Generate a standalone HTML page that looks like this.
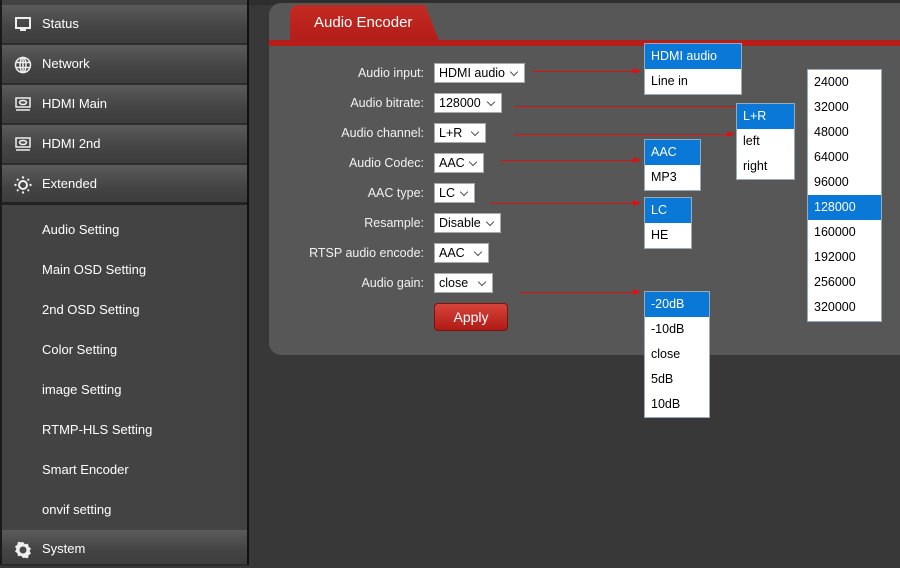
<!DOCTYPE html>
<html><head><meta charset="utf-8"><style>
*{margin:0;padding:0;box-sizing:border-box}
body{width:900px;height:565px;overflow:hidden;background:#383838;font-family:"Liberation Sans",Arial,sans-serif;position:relative}
.a{position:absolute}
#side{left:0;top:0;width:249px;height:565px;background:#434343;border-left:2px solid #1a1a1a;border-right:2px solid #111}
.row{position:absolute;left:0;width:245px;height:40px;background:linear-gradient(#5b5b5b,#444 60%,#3d3d3d);border-bottom:2px solid #2c2c2c;color:#fff;font-size:13px;line-height:38px;padding-left:40px}
.row svg{position:absolute;left:12px;top:11px}
.sub{position:absolute;left:40px;color:#fff;font-size:13px}
#panel{left:269px;top:3px;width:640px;height:352px;background:#575757;border-radius:12px 0 0 12px}
#tab{left:290px;top:5px;width:150px;height:38px;background:linear-gradient(#c32a22,#b31d18);border-radius:8px 8px 0 0;color:#fff;font-size:15px;line-height:36px;padding-left:24px;clip-path:polygon(0 0,135px 0,100% 100%,0 100%)}
#bar{left:269px;top:40px;width:631px;height:6px;background:#b71e1a}
.lbl{position:absolute;right:476px;color:#f2f2f2;font-size:12.5px;text-align:right;white-space:nowrap}
.sel{position:absolute;left:434px;height:20px;background:#fff;border:1px solid #aaa;font-size:12.5px;line-height:18px;padding-left:4px;color:#000}
.sel:after{content:"";position:absolute;right:7px;top:5px;width:5px;height:5px;border-right:1px solid #555;border-bottom:1px solid #555;transform:rotate(45deg)}
.ln{position:absolute;height:0;border-top:1px solid #e01010}
.ln:after{content:"";position:absolute;right:-1px;top:-4px;border-left:8px solid #e01010;border-top:3.5px solid transparent;border-bottom:3.5px solid transparent}
.dd{position:absolute;background:#fff;border:1px solid #9ab;font-size:12.5px;color:#000}
.dd div{height:25px;line-height:25px;padding-left:6px}
.dd .s{background:#0a78d7;color:#fff}
#apply{left:434px;top:303px;width:74px;height:28px;background:linear-gradient(#d6443a,#b11b16);border:1px solid #7a1410;border-radius:4px;color:#fff;font-size:14px;text-align:center;line-height:26px}
</style></head><body>
<div class="a" style="left:0;top:0;width:900px;height:5px;background:#2e2e2e"></div>
<div id="side" class="a">
<div class="row" style="top:5px"><svg width="18" height="18" viewBox="0 0 18 18"><rect x="2" y="2" width="14" height="10" fill="none" stroke="#eee" stroke-width="2"/><rect x="6" y="13" width="6" height="2" fill="#eee"/></svg>Status</div>
<div class="row" style="top:45px"><svg width="18" height="18" viewBox="0 0 18 18" fill="none" stroke="#eee" stroke-width="1.5"><circle cx="9" cy="9" r="7.5"/><ellipse cx="9" cy="9" rx="3" ry="7.5"/><path d="M2 6.5H16M2 11.5H16M9 1.5V16.5"/></svg>Network</div>
<div class="row" style="top:85px"><svg width="18" height="18" viewBox="0 0 18 18" fill="none" stroke="#eee" stroke-width="1.5"><rect x="2" y="2" width="14" height="9"/><ellipse cx="9" cy="6.5" rx="3.5" ry="2"/><path d="M2 14H16"/></svg>HDMI Main</div>
<div class="row" style="top:125px"><svg width="18" height="18" viewBox="0 0 18 18" fill="none" stroke="#eee" stroke-width="1.5"><rect x="2" y="2" width="14" height="9"/><ellipse cx="9" cy="6.5" rx="3.5" ry="2"/><path d="M2 14H16"/></svg>HDMI 2nd</div>
<div class="row" style="top:165px;border-bottom:3px solid #222"><svg width="18" height="18" viewBox="0 0 18 18"><circle cx="9" cy="9" r="4" fill="none" stroke="#eee" stroke-width="2"/><g fill="#eee"><circle cx="9" cy="1.5" r="1.2"/><circle cx="9" cy="16.5" r="1.2"/><circle cx="1.5" cy="9" r="1.2"/><circle cx="16.5" cy="9" r="1.2"/><circle cx="3.7" cy="3.7" r="1.1"/><circle cx="14.3" cy="3.7" r="1.1"/><circle cx="3.7" cy="14.3" r="1.1"/><circle cx="14.3" cy="14.3" r="1.1"/></g></svg>Extended</div>
<div class="sub" style="top:222px">Audio Setting</div>
<div class="sub" style="top:262px">Main OSD Setting</div>
<div class="sub" style="top:302px">2nd OSD Setting</div>
<div class="sub" style="top:342px">Color Setting</div>
<div class="sub" style="top:382px">image Setting</div>
<div class="sub" style="top:422px">RTMP-HLS Setting</div>
<div class="sub" style="top:462px">Smart Encoder</div>
<div class="sub" style="top:502px">onvif setting</div>
<div class="row" style="top:530px;height:36px"><svg width="18" height="18" viewBox="0 0 18 18"><path d="M9 1l2 2.2 3-.5.6 3 2.4 1.8-1.4 2.5 1.4 2.5-2.4 1.8-.6 3-3-.5L9 17l-2-2.2-3 .5-.6-3L1 10.5 2.4 8 1 5.5l2.4-1.8.6-3 3 .5z" fill="#eee"/><circle cx="9" cy="9" r="3.5" fill="#4a4a4a"/></svg>System</div>
</div>
<div id="panel" class="a"></div>
<div id="tab" class="a">Audio Encoder</div>
<div id="bar" class="a"></div>

<div class="lbl" style="top:66px">Audio input:</div><div class="sel" style="top:63px;width:91px">HDMI audio</div>
<div class="lbl" style="top:96px">Audio bitrate:</div><div class="sel" style="top:93px;width:68px">128000</div>
<div class="lbl" style="top:126px">Audio channel:</div><div class="sel" style="top:123px;width:52px">L+R</div>
<div class="lbl" style="top:156px">Audio Codec:</div><div class="sel" style="top:153px;width:50px">AAC</div>
<div class="lbl" style="top:186px">AAC type:</div><div class="sel" style="top:183px;width:41px">LC</div>
<div class="lbl" style="top:216px">Resample:</div><div class="sel" style="top:213px;width:67px">Disable</div>
<div class="lbl" style="top:246px">RTSP audio encode:</div><div class="sel" style="top:243px;width:55px">AAC</div>
<div class="lbl" style="top:276px">Audio gain:</div><div class="sel" style="top:273px;width:59px">close</div>
<div id="apply" class="a">Apply</div>

<div class="ln" style="left:532px;top:71px;width:108px"></div>
<div class="ln" style="left:514px;top:106px;width:280px"></div>
<div class="ln" style="left:514px;top:134px;width:220px"></div>
<div class="ln" style="left:500px;top:160px;width:140px"></div>
<div class="ln" style="left:490px;top:203px;width:150px"></div>
<div class="ln" style="left:520px;top:292px;width:120px"></div>

<div class="dd" style="left:644px;top:43px;width:98px"><div class="s">HDMI audio</div><div>Line in</div></div>
<div class="dd" style="left:807px;top:69px;width:75px;padding-bottom:1px"><div>24000</div><div>32000</div><div>48000</div><div>64000</div><div>96000</div><div class="s">128000</div><div>160000</div><div>192000</div><div>256000</div><div>320000</div></div>
<div class="dd" style="left:736px;top:103px;width:59px"><div class="s">L+R</div><div>left</div><div>right</div></div>
<div class="dd" style="left:644px;top:139px;width:57px"><div class="s">AAC</div><div>MP3</div></div>
<div class="dd" style="left:644px;top:197px;width:48px"><div class="s">LC</div><div>HE</div></div>
<div class="dd" style="left:644px;top:291px;width:66px"><div class="s">-20dB</div><div>-10dB</div><div>close</div><div>5dB</div><div>10dB</div></div>
</body></html>
